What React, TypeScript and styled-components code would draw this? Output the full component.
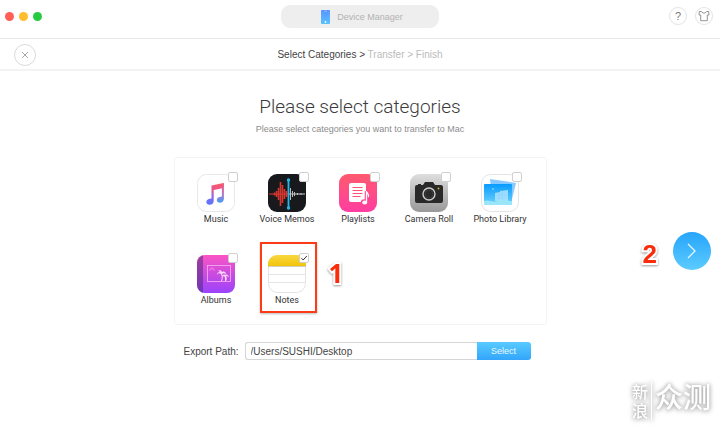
import React, { useState } from "react";
import styled, { createGlobalStyle, css } from "styled-components";

const GlobalStyle = createGlobalStyle`
  * { box-sizing: border-box; }
  body {
    margin: 0;
    background: #fff;
    color: #444;
    font-family: "Liberation Sans", Arial, sans-serif;
    font-size: 10px;
  }
  button, input { font: inherit; }
`;

const Page = styled.div`
  position: relative;
  display: flex;
  flex-direction: column;
  min-height: 100vh;
  overflow: hidden;
`;

const TitleBar = styled.header`
  display: grid;
  grid-template-columns: 1fr auto 1fr;
  align-items: start;
  height: 39px;
  padding: 5px 7px 0;
  border-bottom: 1px solid #e6e6e6;
`;

const Lights = styled.div`
  display: flex;
  gap: 5px;
  padding-top: 7px;
  margin-left: -2px;
`;

const Light = styled.button<{ $color: string }>`
  width: 9px;
  height: 9px;
  padding: 0;
  border: 0;
  border-radius: 50%;
  background: ${(p) => p.$color};
`;

const DevicePill = styled.button`
  display: flex;
  align-items: center;
  justify-content: center;
  gap: 7px;
  width: 158px;
  height: 23px;
  padding: 0 0 0 4px;
  border: 0;
  border-radius: 9px;
  background: #eee;
  color: #b2b2b2;
  font-size: 9px;
`;

const Tools = styled.div`
  display: flex;
  justify-content: flex-end;
  gap: 8px;
  padding-top: 2px;
`;

const RoundButton = styled.button<{ $large?: boolean }>`
  display: flex;
  align-items: center;
  justify-content: center;
  width: ${(p) => (p.$large ? 22 : 18)}px;
  height: ${(p) => (p.$large ? 22 : 18)}px;
  padding: 0;
  border: 1px solid ${(p) => (p.$large ? "#dadada" : "#e4e4e4")};
  border-radius: 50%;
  background: #fff;
  color: #777;
  font-size: 11px;
`;

const StepBar = styled.nav`
  display: grid;
  grid-template-columns: 1fr auto 1fr;
  align-items: center;
  height: 32px;
  padding: 2px 14px 0;
  border-bottom: 2px solid #f3f3f3;
`;

const Steps = styled.div`
  color: #bbb;
  line-height: 12px;
`;

const CurrentStep = styled.span`
  color: #444;
`;

const Main = styled.main`
  position: relative;
  flex: 1;
  display: flex;
  flex-direction: column;
  align-items: center;
  padding: 24px 60px;
`;

const Heading = styled.h1`
  margin: 0;
  color: #3c3c3c;
  font-family: "Roboto", "Liberation Sans", sans-serif;
  font-size: 19px;
  font-weight: 300;
  line-height: 24px;
`;

const Subheading = styled.p`
  margin: 4px 0 0;
  color: #8c8c8c;
  font-size: 9px;
  line-height: 12px;
`;

const Panel = styled.section`
  display: grid;
  grid-template-columns: repeat(5, 71px);
  grid-auto-rows: 81px;
  width: 100%;
  max-width: 373px;
  height: 168px;
  margin-top: 22px;
  padding: 16px 6px 0;
  border: 1px solid #f4f4f4;
  border-radius: 3px;
`;

const Category = styled.label`
  position: relative;
  display: flex;
  flex-direction: column;
  align-items: center;
  gap: 1px;
  color: #333;
  font-family: "Roboto", "Liberation Sans", sans-serif;
  font-size: 9px;
  line-height: 12px;
  white-space: nowrap;
`;

const IconFrame = styled.span`
  position: relative;
  display: block;
  width: 38px;
  height: 38px;

  svg { display: block; width: 38px; height: 38px; }
`;

const Check = styled.input`
  position: absolute;
  top: -2px;
  right: -3px;
  width: 10px;
  height: 10px;
  margin: 0;
  appearance: none;
  border: 1px solid #cfcfcf;
  border-radius: 2px;
  background: #fff;

  &:checked {
    background: #fff url("data:image/svg+xml,%3Csvg xmlns='http://www.w3.org/2000/svg' viewBox='0 0 8 8'%3E%3Cpath d='M1.5 4.2 3.2 6 6.8 2' fill='none' stroke='%23333'/%3E%3C/svg%3E") center / 8px 8px no-repeat;
  }
`;

const Marker = styled.span`
  position: absolute;
  top: -13px;
  left: 8px;
  width: 57px;
  height: 71px;
  border: 2px solid #ff3a17;
  box-shadow: 0 1px 2px #bbb;
`;

const callout = css`
  color: #fa2c0c;
  font-weight: 700;
  font-size: 26px;
  line-height: 28px;
  -webkit-text-stroke: 4px #fff;
  paint-order: stroke fill;
  filter: drop-shadow(0 1px 1px #999);
`;

const FirstCallout = styled.span`
  ${callout}
  position: absolute;
  top: 4px;
  left: 77px;
  font-family: "Open Sans", "Liberation Sans", sans-serif;
`;

const SecondCallout = styled.span`
  ${callout}
  padding-top: 6px;
`;

const NextArea = styled.div`
  position: absolute;
  top: 161px;
  right: 9px;
  display: flex;
  align-items: center;
  gap: 16px;
`;

const NextButton = styled.button`
  display: flex;
  align-items: center;
  justify-content: center;
  width: 38px;
  height: 38px;
  padding: 0;
  border: 0;
  border-radius: 50%;
  background: linear-gradient(#27a5fb, #5ccbff);
`;

const ExportForm = styled.form`
  display: flex;
  align-items: center;
  width: 100%;
  max-width: 373px;
  height: 18px;
  margin-top: 17px;
  padding: 0 16px 0 10px;
`;

const ExportLabel = styled.label`
  flex: 0 0 61px;
`;

const PathInput = styled.input`
  flex: 1;
  min-width: 0;
  height: 18px;
  padding: 1px 5px 0;
  border: 1px solid #d5d5d5;
  border-right: 0;
  border-radius: 3px 0 0 3px;
  background: #fff;
  color: #444;
`;

const SelectButton = styled.button`
  width: 54px;
  height: 18px;
  padding: 0;
  border: 0;
  border-radius: 0 3px 3px 0;
  background: linear-gradient(#58cbff, #32a5fb);
  color: #e8f8ff;
  font-size: 9px;
`;

const Watermark = styled.div`
  position: absolute;
  right: 9px;
  bottom: 8px;
  display: flex;
  align-items: flex-start;
  color: #fff;
  font-family: "Noto Sans CJK SC", sans-serif;
  font-weight: 500;
  filter: drop-shadow(0 0 2px #aaa) drop-shadow(0 1px 2px #ccc);
`;

const WatermarkSmall = styled.span`
  display: flex;
  flex-direction: column;
  padding-right: 3px;
  border-right: 1px solid #fff;
  font-size: 16px;
  line-height: 19px;
`;

const WatermarkLarge = styled.span`
  padding-left: 3px;
  font-size: 28px;
  line-height: 28px;
`;

const PhoneIcon = () => (
  <svg width="9" height="14" viewBox="0 0 9 14" aria-hidden="true">
    <defs>
      <linearGradient id="phone" x2="0" y2="1"><stop stopColor="#5791ff" /><stop offset="1" stopColor="#55c4ff" /></linearGradient>
    </defs>
    <rect width="9" height="14" rx="1" fill="url(#phone)" />
    <path d="M3 1.2h3" stroke="#b9d3ff" strokeWidth=".6" />
    <path d="M1 2v8.500h7V2" fill="none" stroke="#79adff" strokeWidth=".4" />
    <circle cx="4.500" cy="12" r=".9" fill="#fff" />
  </svg>
);

const CloseIcon = () => (
  <svg width="8" height="8" viewBox="0 0 8 8" aria-hidden="true">
    <path d="m1 1 6 6m0-6L1 7" stroke="#aaa" />
  </svg>
);

const ShirtIcon = () => (
  <svg width="12" height="12" viewBox="0 0 12 12" aria-hidden="true">
    <path d="M3.500 1.500H1.300L1 5h1.700v5.700h6.600V5H11l-.3-3.500H8.500L7.300 3H4.700Z" fill="none" stroke="#888" strokeWidth=".9" />
  </svg>
);

const MusicIcon = () => (
  <svg viewBox="0 0 38 38" aria-hidden="true">
    <defs>
      <linearGradient id="music" x1=".7" y1="0" x2=".4" y2="1"><stop stopColor="#fa596b" /><stop offset=".38" stopColor="#e6568c" /><stop offset=".65" stopColor="#8f68ed" /><stop offset="1" stopColor="#5c74fb" /></linearGradient>
      <linearGradient id="musicStem" x2="0" y2="1"><stop stopColor="#f2566d" /><stop offset=".5" stopColor="#bc72c5" /><stop offset="1" stopColor="#459df8" /></linearGradient>
    </defs>
    <rect x=".5" y=".5" width="37" height="37" rx="9" fill="#fff" stroke="#e8e8e8" />
    <path d="M14.500 11.500 26.500 9v5l-9.800 2v10.700c0 2.500-1.600 4-4 4.100-2.100 0-3.400-1.200-3.400-2.800 0-2.200 2.300-3.100 5.200-3.400Z" fill="url(#music)" />
    <path d="M24.900 10 26.900 9v15.500c0 2.700-1.500 4.200-3.900 4.200-1.900 0-3.200-1.100-3.200-2.700 0-2.200 2-3 5.100-3.500Z" fill="url(#musicStem)" />
  </svg>
);

const VoiceIcon = () => (
  <svg viewBox="0 0 38 38" aria-hidden="true">
    <rect width="38" height="38" rx="9" fill="#17191c" />
    <path d="M1 20h19" stroke="#e53832" />
    <path d="M6.500 18.500v3M8.500 17v6M10.500 14v12M12.500 8v24M14.500 11v18M16.500 15v10M18.500 17v6" stroke="#d9352f" strokeWidth="1.600" />
    <path d="M21 20h16" stroke="#ccc" />
    <path d="M22.500 14v12M24.500 17v6M26.500 18v4M29.500 19v2M33 19v2" stroke="#bbb" />
    <path d="M20.500 6v28" stroke="#27b6ea" strokeWidth="1.800" />
    <circle cx="20.500" cy="6" r="1.700" fill="#27b6ea" /><circle cx="20.500" cy="34" r="1.700" fill="#27b6ea" />
  </svg>
);

const PlaylistIcon = () => (
  <svg viewBox="0 0 38 38" aria-hidden="true">
    <defs><linearGradient id="playlist" x2="0" y2="1"><stop stopColor="#ff5a6e" /><stop offset="1" stopColor="#ff3ea2" /></linearGradient></defs>
    <rect width="38" height="38" rx="9" fill="url(#playlist)" />
    <path d="M12 9h13a2 2 0 0 1 2 2v17H12a2 2 0 0 1-2-2V11a2 2 0 0 1 2-2Z" fill="#fff" />
    <path d="M13.500 13.500h10M13.500 16.500h10M13.500 19.500h10M13.500 22.500h8" stroke="#ff5378" />
    <path d="M27.500 17v11" stroke="#ff4a8b" strokeWidth="3.500" />
    <ellipse cx="25.500" cy="28.500" rx="3.700" ry="3.300" fill="#ff4596" />
    <path d="M27.500 17v11M27.500 17c.3 2.500 3 3 1.900 6" fill="none" stroke="#fff" strokeWidth="1.300" />
    <ellipse cx="25.700" cy="28.500" rx="2.500" ry="2" fill="#fff" />
  </svg>
);

const CameraIcon = () => (
  <svg viewBox="0 0 38 38" aria-hidden="true">
    <defs><linearGradient id="camera" x2="0" y2="1"><stop stopColor="#dedede" /><stop offset="1" stopColor="#999" /></linearGradient></defs>
    <rect width="38" height="38" rx="9" fill="url(#camera)" />
    <path d="M8 11v-1h3v1h2l2-3h8l2 3h6a2 2 0 0 1 2 2v14a2 2 0 0 1-2 2H7a2 2 0 0 1-2-2V13a2 2 0 0 1 2-2Z" fill="#292929" />
    <circle cx="19" cy="20" r="6" fill="#292929" stroke="#ccc" strokeWidth="1.400" />
    <circle cx="19" cy="20" r="4" fill="none" stroke="#444" strokeWidth=".6" />
    <circle cx="28.500" cy="14.500" r="1" fill="#c8a42c" />
  </svg>
);

const PhotosIcon = () => (
  <svg viewBox="0 0 38 38" aria-hidden="true">
    <defs><linearGradient id="photos" x2="0" y2="1"><stop stopColor="#079bff" /><stop offset="1" stopColor="#70d3fb" /></linearGradient></defs>
    <rect x=".5" y=".5" width="37" height="37" rx="9" fill="#fff" stroke="#e4e4e4" />
    <path d="m9 5 26 4-5 20H12Z" fill="#8ac9ff" />
    <rect x="3" y="10" width="28" height="21" rx="1" fill="url(#photos)" />
    <path d="M14 27V19l5-1v-1l8-1v11Z" fill="#b7e6ff" opacity=".8" />
    <path d="M18 18v8M21 17v9M15 21h11M15 24h11" stroke="#86d0fc" strokeWidth=".5" />
    <path d="M3 27c5-2 8 2 14 0s9 0 14 0v4H3Z" fill="#9be5fa" />
    <circle cx="12" cy="15" r="1" fill="#7bd0ff" />
  </svg>
);

const AlbumIcon = () => (
  <svg viewBox="0 0 38 38" aria-hidden="true">
    <defs>
      <linearGradient id="album" x2="0" y2="1"><stop stopColor="#fb54c4" /><stop offset="1" stopColor="#9b43fc" /></linearGradient>
      <clipPath id="albumClip"><rect width="38" height="38" rx="8" /></clipPath>
    </defs>
    <g clipPath="url(#albumClip)">
      <path d="M0 0h38v38H0Z" fill="url(#album)" /><path d="M0 0h6v38H0Z" fill="#432778" opacity=".5" />
      <rect x="10.500" y="10.500" width="23" height="16" fill="none" stroke="#f4b2f6" strokeWidth=".8" />
      <path d="M24 26c1-3 1-5 0-7-2-1-3-1-4 1 0-2 1-3 3-3-1-1-1-1-2-1 2-1 3-1 4 1 2-1 4 0 4 2-2-1-3-1-4 0 1 2 1 4 0 7ZM28 26c0-3 0-4-1-5l-2 1c0-2 2-3 3-2 2-1 3 0 4 2-2-1-2-1-3-1 1 2 1 3 0 5" fill="#ffd6fa" />
      <path d="M13 15.500c0-3 4-3 4 0" fill="none" stroke="#ffb4ed" strokeWidth=".7" />
    </g>
  </svg>
);

const NotesIcon = () => (
  <svg viewBox="0 0 38 38" aria-hidden="true">
    <defs><linearGradient id="notes" x2="0" y2="1"><stop stopColor="#f9d740" /><stop offset="1" stopColor="#f2c509" /></linearGradient></defs>
    <rect x=".5" y=".5" width="37" height="37" rx="9" fill="#fff" stroke="#e4e4e4" />
    <path d="M0 11V9a9 9 0 0 1 9-9h20a9 9 0 0 1 9 9v2Z" fill="url(#notes)" />
    <path d="M0 11.400h38" stroke="#b9b398" strokeWidth=".7" /><path d="M1 19.500h36M1 27.500h36" stroke="#ddd" strokeWidth=".8" />
  </svg>
);

const categories = [
  { name: "Music", Icon: MusicIcon },
  { name: "Voice Memos", Icon: VoiceIcon },
  { name: "Playlists", Icon: PlaylistIcon },
  { name: "Camera Roll", Icon: CameraIcon },
  { name: "Photo Library", Icon: PhotosIcon },
  { name: "Albums", Icon: AlbumIcon },
  { name: "Notes", Icon: NotesIcon },
];

export default function App() {
  const [selected, setSelected] = useState<string[]>(["Notes"]);
  const [path, setPath] = useState("/Users/SUSHI/Desktop");
  const toggle = (name: string) =>
    setSelected((all) => (all.includes(name) ? all.filter((n) => n !== name) : [...all, name]));

  return (
    <Page>
      <GlobalStyle />
      <TitleBar>
        <Lights>
          <Light $color="#ff5f57" aria-label="Close window" />
          <Light $color="#ffbd2e" aria-label="Minimize window" />
          <Light $color="#28ca42" aria-label="Zoom window" />
        </Lights>
        <DevicePill><PhoneIcon />Device Manager</DevicePill>
        <Tools>
          <RoundButton aria-label="Help">?</RoundButton>
          <RoundButton aria-label="Skins"><ShirtIcon /></RoundButton>
        </Tools>
      </TitleBar>
      <StepBar>
        <RoundButton $large aria-label="Cancel"><CloseIcon /></RoundButton>
        <Steps><CurrentStep>Select Categories &gt;</CurrentStep> Transfer &gt; Finish</Steps>
      </StepBar>
      <Main>
        <Heading>Please select categories</Heading>
        <Subheading>Please select categories you want to transfer to Mac</Subheading>
        <Panel>
          {categories.map(({ name, Icon }) => (
            <Category key={name}>
              <IconFrame>
                <Icon />
                <Check type="checkbox" checked={selected.includes(name)} onChange={() => toggle(name)} />
              </IconFrame>
              {name}
              {name === "Notes" && <><Marker aria-hidden="true" /><FirstCallout aria-hidden="true">1</FirstCallout></>}
            </Category>
          ))}
        </Panel>
        <ExportForm onSubmit={(e) => e.preventDefault()}>
          <ExportLabel htmlFor="export-path">Export Path:</ExportLabel>
          <PathInput id="export-path" value={path} onChange={(e) => setPath(e.target.value)} />
          <SelectButton type="button">Select</SelectButton>
        </ExportForm>
        <NextArea>
          <SecondCallout>2</SecondCallout>
          <NextButton aria-label="Next">
            <svg width="12" height="18" viewBox="0 0 12 18" aria-hidden="true"><path d="m2 2 7 7-7 7" fill="none" stroke="#e4f7ff" strokeWidth="1.300" /></svg>
          </NextButton>
        </NextArea>
      </Main>
      <Watermark>
        <WatermarkSmall><span>新</span><span>浪</span></WatermarkSmall>
        <WatermarkLarge>众测</WatermarkLarge>
      </Watermark>
    </Page>
  );
}
